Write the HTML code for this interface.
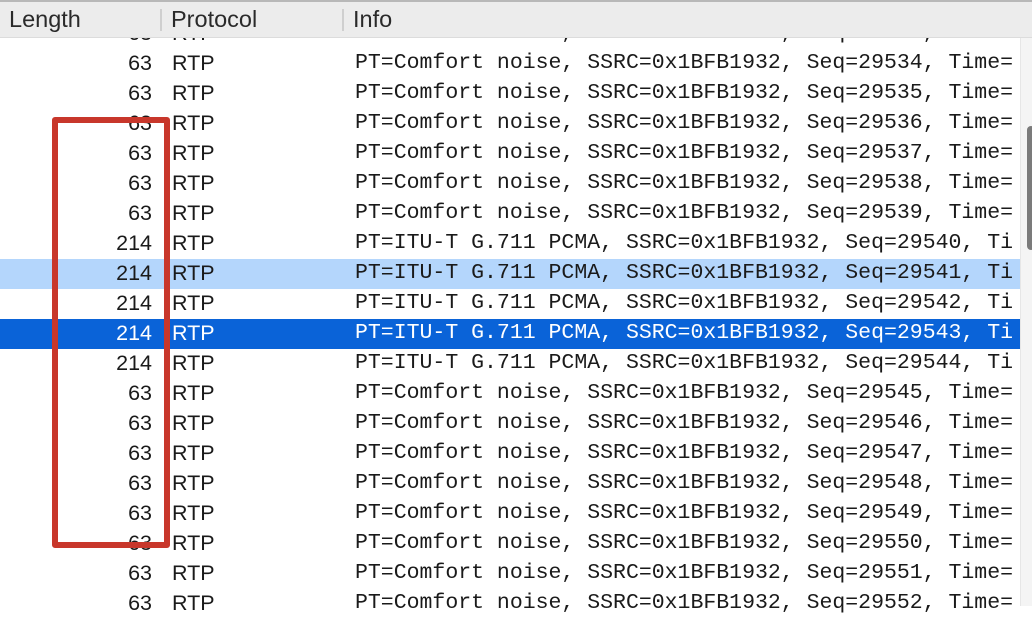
<!DOCTYPE html>
<html><head><meta charset="utf-8"><style>
*{margin:0;padding:0;box-sizing:border-box}
body{width:1032px;height:606px;overflow:hidden;background:#fff;position:relative;font-family:"Liberation Sans",sans-serif;color:#1a1a1a}
.hdr{position:absolute;left:0;top:0;width:1032px;height:38px;background:#ececec;border-top:2px solid #b8b8b8;border-bottom:1px solid #dcdcdc;z-index:2}
.hdr span{position:absolute;top:4px;font-size:23.5px;color:#2a2a2a}
.sep{position:absolute;top:7px;width:2px;height:22px;background:#cfcfcf}
.rows{position:absolute;left:0;top:19px;width:1020px}
.r{height:30px;position:relative;font-size:21.5px;line-height:29px;white-space:nowrap;overflow:hidden}
.r .l{position:absolute;right:868px;top:0}
.r .p{position:absolute;left:172px;top:0}
.r .i{position:absolute;left:355px;top:0;font-family:"Liberation Mono",monospace;font-size:21.5px}
.lb{background:#b4d6fc}
.db{background:#0a63d8;color:#fff}
.track{position:absolute;left:1020px;top:38px;width:12px;height:568px;background:#f4f4f4;border-left:1px solid #e6e6e6}
.thumb{position:absolute;left:1027px;top:126px;width:8px;height:124px;background:#7b7b7b;border-radius:4px}
.box{position:absolute;left:52px;top:117px;width:118px;height:431px;border:6px solid #c8372b;border-radius:3px;z-index:3}
</style></head><body>
<div class="hdr">
<span style="left:9px">Length</span><div class="sep" style="left:160px"></div>
<span style="left:171px">Protocol</span><div class="sep" style="left:342px"></div>
<span style="left:353px">Info</span>
</div>
<div class="rows">
<div class="r"><span class="l">63</span><span class="p">RTP</span><span class="i">PT=Comfort noise, SSRC=0x1BFB1932, Seq=29533, Time=</span></div>
<div class="r"><span class="l">63</span><span class="p">RTP</span><span class="i">PT=Comfort noise, SSRC=0x1BFB1932, Seq=29534, Time=</span></div>
<div class="r"><span class="l">63</span><span class="p">RTP</span><span class="i">PT=Comfort noise, SSRC=0x1BFB1932, Seq=29535, Time=</span></div>
<div class="r"><span class="l">63</span><span class="p">RTP</span><span class="i">PT=Comfort noise, SSRC=0x1BFB1932, Seq=29536, Time=</span></div>
<div class="r"><span class="l">63</span><span class="p">RTP</span><span class="i">PT=Comfort noise, SSRC=0x1BFB1932, Seq=29537, Time=</span></div>
<div class="r"><span class="l">63</span><span class="p">RTP</span><span class="i">PT=Comfort noise, SSRC=0x1BFB1932, Seq=29538, Time=</span></div>
<div class="r"><span class="l">63</span><span class="p">RTP</span><span class="i">PT=Comfort noise, SSRC=0x1BFB1932, Seq=29539, Time=</span></div>
<div class="r"><span class="l">214</span><span class="p">RTP</span><span class="i">PT=ITU-T G.711 PCMA, SSRC=0x1BFB1932, Seq=29540, Ti</span></div>
<div class="r lb"><span class="l">214</span><span class="p">RTP</span><span class="i">PT=ITU-T G.711 PCMA, SSRC=0x1BFB1932, Seq=29541, Ti</span></div>
<div class="r"><span class="l">214</span><span class="p">RTP</span><span class="i">PT=ITU-T G.711 PCMA, SSRC=0x1BFB1932, Seq=29542, Ti</span></div>
<div class="r db"><span class="l">214</span><span class="p">RTP</span><span class="i">PT=ITU-T G.711 PCMA, SSRC=0x1BFB1932, Seq=29543, Ti</span></div>
<div class="r"><span class="l">214</span><span class="p">RTP</span><span class="i">PT=ITU-T G.711 PCMA, SSRC=0x1BFB1932, Seq=29544, Ti</span></div>
<div class="r"><span class="l">63</span><span class="p">RTP</span><span class="i">PT=Comfort noise, SSRC=0x1BFB1932, Seq=29545, Time=</span></div>
<div class="r"><span class="l">63</span><span class="p">RTP</span><span class="i">PT=Comfort noise, SSRC=0x1BFB1932, Seq=29546, Time=</span></div>
<div class="r"><span class="l">63</span><span class="p">RTP</span><span class="i">PT=Comfort noise, SSRC=0x1BFB1932, Seq=29547, Time=</span></div>
<div class="r"><span class="l">63</span><span class="p">RTP</span><span class="i">PT=Comfort noise, SSRC=0x1BFB1932, Seq=29548, Time=</span></div>
<div class="r"><span class="l">63</span><span class="p">RTP</span><span class="i">PT=Comfort noise, SSRC=0x1BFB1932, Seq=29549, Time=</span></div>
<div class="r"><span class="l">63</span><span class="p">RTP</span><span class="i">PT=Comfort noise, SSRC=0x1BFB1932, Seq=29550, Time=</span></div>
<div class="r"><span class="l">63</span><span class="p">RTP</span><span class="i">PT=Comfort noise, SSRC=0x1BFB1932, Seq=29551, Time=</span></div>
<div class="r"><span class="l">63</span><span class="p">RTP</span><span class="i">PT=Comfort noise, SSRC=0x1BFB1932, Seq=29552, Time=</span></div>
</div>
<div class="track"></div>
<div class="thumb"></div>
<div class="box"></div>
</body></html>
